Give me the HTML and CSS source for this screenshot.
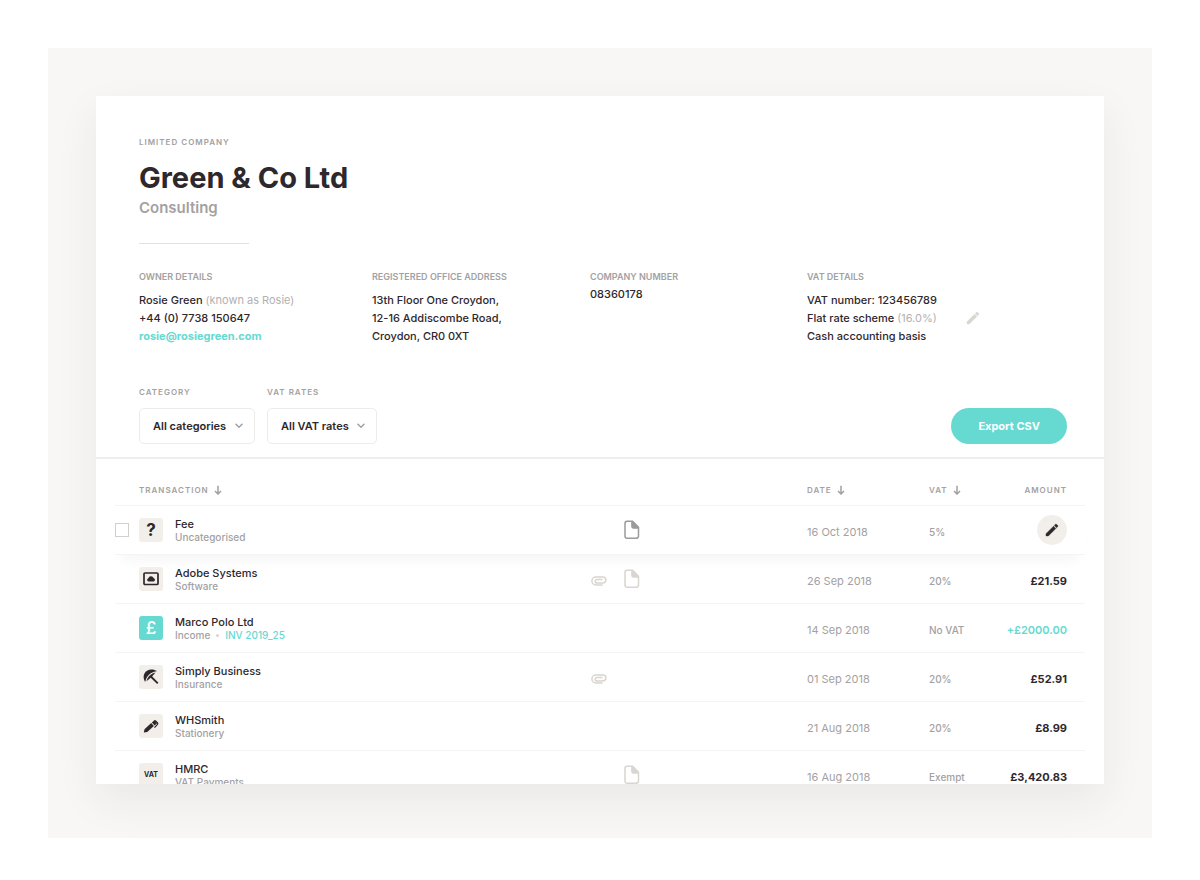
FILE: index.html
```html
<!DOCTYPE html>
<html lang="en">
<head>
<meta charset="utf-8">
<meta name="viewport" content="width=device-width, initial-scale=1">
<title>Green &amp; Co Ltd</title>
<link rel="stylesheet" href="styles.css">
</head>
<body>
<svg class="defs" aria-hidden="true">
  <symbol id="pencil" viewBox="0 0 24 24"><path d="M3 17.500V21h3.500L17.800 9.700l-3.500-3.500zM20.700 6.800a1 1 0 0 0 0-1.400l-2.100-2.100a1 1 0 0 0-1.400 0l-1.800 1.800 3.500 3.500z" fill="currentColor" stroke="currentColor" stroke-width=".6"/></symbol>
  <symbol id="arrow" viewBox="0 0 8 10"><path d="M4 .8v8M1 6l3 3 3-3" fill="none" stroke="currentColor" stroke-width="1.5"/></symbol>
  <symbol id="chevron" viewBox="0 0 8 6"><path d="M1 1.2l3 3 3-3" fill="none" stroke="currentColor" stroke-width="1.5" stroke-linecap="round" stroke-linejoin="round"/></symbol>
  <symbol id="file" viewBox="0 0 16 20"><path d="M3 1.3h5.6l5.900 6V16a2.300 2.300 0 0 1-2.300 2.300H3.200A2.300 2.300 0 0 1 1 16V3.500A2.200 2.200 0 0 1 3 1.300z" fill="none" stroke="currentColor" stroke-width="1.500"/><path d="M7.200 1.300h1.800l6 6.200v1.300H9.500a2.300 2.300 0 0 1-2.300-2.300z" fill="currentColor"/></symbol>
  <symbol id="clip" viewBox="0 0 16 10"><path d="M11.500 9H4.900a4 4 0 0 1 0-8h7a3 3 0 0 1 0 6H6a1.800 1.800 0 0 1 0-3.600h5.500" fill="none" stroke="currentColor" stroke-width="1.500"/></symbol>
</svg>
<main class="stage">
  <article class="card">
    <header class="company">
      <p class="label tracked">LIMITED COMPANY</p>
      <h1 class="title">Green &amp; Co Ltd</h1>
      <p class="sector">Consulting</p>
      <hr class="rule">
      <div class="details">
        <section>
          <h2 class="label">OWNER DETAILS</h2>
          <div class="lines">
            <p>Rosie Green <span class="muted">(known as Rosie)</span></p>
            <p>+44 (0) 7738 150647</p>
            <p><a class="link strong" href="mailto:rosie@rosiegreen.com">rosie@rosiegreen.com</a></p>
          </div>
        </section>
        <section>
          <h2 class="label">REGISTERED OFFICE ADDRESS</h2>
          <div class="lines">
            <p>13th Floor One Croydon,</p>
            <p>12-16 Addiscombe Road,</p>
            <p>Croydon, CR0 0XT</p>
          </div>
        </section>
        <section>
          <h2 class="label">COMPANY NUMBER</h2>
          <div class="lines close"><p>08360178</p></div>
        </section>
        <section>
          <h2 class="label">VAT DETAILS</h2>
          <div class="lines vat-lines">
            <div>
              <p>VAT number: 123456789</p>
              <p>Flat rate scheme <span class="muted">(16.0%)</span></p>
              <p>Cash accounting basis</p>
            </div>
            <button class="edit-plain" type="button" aria-label="Edit VAT details"><svg width="16" height="16"><use href="#pencil"/></svg></button>
          </div>
        </section>
      </div>
    </header>

    <form class="filters">
      <div class="field">
        <label class="label tracked" for="category">CATEGORY</label>
        <div class="select"><select id="category"><option>All categories</option></select><svg width="8" height="6"><use href="#chevron"/></svg></div>
      </div>
      <div class="field">
        <label class="label tracked" for="rates">VAT RATES</label>
        <div class="select"><select id="rates"><option>All VAT rates</option></select><svg width="8" height="6"><use href="#chevron"/></svg></div>
      </div>
      <button class="export" type="button">Export CSV</button>
    </form>

    <table class="transactions">
      <colgroup><col class="c-check"><col><col class="c-files"><col class="c-date"><col class="c-vat"><col class="c-amount"></colgroup>
      <thead>
        <tr>
          <td></td>
          <th scope="col"><span class="label tracked">TRANSACTION <svg width="8" height="10"><use href="#arrow"/></svg></span></th>
          <td></td>
          <th scope="col"><span class="label tracked">DATE <svg width="8" height="10"><use href="#arrow"/></svg></span></th>
          <th scope="col"><span class="label tracked">VAT <svg width="8" height="10"><use href="#arrow"/></svg></span></th>
          <th scope="col" class="amount"><span class="label tracked">AMOUNT</span></th>
        </tr>
      </thead>
      <tbody>
        <tr class="active">
          <td><input class="check" type="checkbox" aria-label="Select Fee"></td>
          <td><div class="entry"><span class="tile question">?</span><div><p class="name">Fee</p><p class="kind">Uncategorised</p></div></div></td>
          <td><div class="files"><svg class="file dark" width="16" height="20"><use href="#file"/></svg></div></td>
          <td class="date">16 Oct 2018</td>
          <td class="vat">5%</td>
          <td class="action"><button class="edit" type="button" aria-label="Edit Fee"><svg width="16" height="16"><use href="#pencil"/></svg></button></td>
        </tr>
        <tr>
          <td></td>
          <td><div class="entry"><span class="tile"><svg width="16" height="14" viewBox="0 0 16 14"><rect x="1" y="1" width="14" height="11.500" rx="1" fill="none" stroke="currentColor" stroke-width="1.700"/><path d="M5.600 9.500a1.700 1.700 0 0 1-.3-3.300 2.800 2.800 0 0 1 5.300-.3 1.900 1.900 0 0 1 .1 3.600z" fill="currentColor"/></svg></span><div><p class="name">Adobe Systems</p><p class="kind">Software</p></div></div></td>
          <td><div class="files"><svg class="clip" width="16" height="10"><use href="#clip"/></svg><svg class="file" width="16" height="20"><use href="#file"/></svg></div></td>
          <td class="date">26 Sep 2018</td>
          <td class="vat">20%</td>
          <td class="amount">£21.59</td>
        </tr>
        <tr>
          <td></td>
          <td><div class="entry"><span class="tile pound">£</span><div><p class="name">Marco Polo Ltd</p><p class="kind">Income<span class="dot"></span><a class="link" href="#invoice">INV 2019_25</a></p></div></div></td>
          <td></td>
          <td class="date">14 Sep 2018</td>
          <td class="vat">No VAT</td>
          <td class="amount income">+£2000.00</td>
        </tr>
        <tr>
          <td></td>
          <td><div class="entry"><span class="tile"><svg width="16" height="16" viewBox="0 0 16 16"><path d="M2.200 13C-1.500 7.500 1.800.800 8 .600c2.300-.1 4.300.5 6 1.700C8.500 2.600 3.500 6.500 2.200 13z" fill="currentColor"/><path d="M3.500 12.200C4.300 8 7.500 4.700 12.500 3.500L9.300 7.200 7.400 9.100z" fill="currentColor"/><path d="M7.600 7.300l7.200 7.100" stroke="currentColor" stroke-width="1.900" fill="none"/></svg></span><div><p class="name">Simply Business</p><p class="kind">Insurance</p></div></div></td>
          <td><div class="files"><svg class="clip" width="16" height="10"><use href="#clip"/></svg></div></td>
          <td class="date">01 Sep 2018</td>
          <td class="vat">20%</td>
          <td class="amount">£52.91</td>
        </tr>
        <tr>
          <td></td>
          <td><div class="entry"><span class="tile"><svg width="16" height="16" viewBox="0 0 16 16"><path d="M.800 14.600l.7-3.300 6.700-6.200 2.700 2.900-6.700 6zM8.900 4.400l2.600-2.300 2.800 3-2.700 2.400z" fill="currentColor"/><path d="M12 2.300l2.600 2.600c.4.500.3 1-.1 1.500l-3 3.200" fill="none" stroke="currentColor" stroke-width="1.200"/></svg></span><div><p class="name">WHSmith</p><p class="kind">Stationery</p></div></div></td>
          <td></td>
          <td class="date">21 Aug 2018</td>
          <td class="vat">20%</td>
          <td class="amount">£8.99</td>
        </tr>
        <tr>
          <td></td>
          <td><div class="entry"><span class="tile vat-tile">VAT</span><div><p class="name">HMRC</p><p class="kind">VAT Payments</p></div></div></td>
          <td><div class="files"><svg class="file" width="16" height="20"><use href="#file"/></svg></div></td>
          <td class="date">16 Aug 2018</td>
          <td class="vat">Exempt</td>
          <td class="amount">£3,420.83</td>
        </tr>
      </tbody>
    </table>
  </article>
</main>
</body>
</html>
```
FILE: styles.css
```css
:root {
  --ink: #2e272c;
  --grey: #a3a1a2;
  --pale: #d9d5d0;
  --sand: #f2efeb;
  --line: #f5f4f3;
  --teal: #66d9d1;
}

* { box-sizing: border-box; }

body {
  margin: 0;
  height: 100vh;
  padding: 48px 48px 42px;
  background: #fff;
  color: var(--ink);
  font: 11px/18px Inter, "Liberation Sans", sans-serif;
}

h1, h2, p { margin: 0; }
button, select, input { margin: 0; font: inherit; color: inherit; }
button { border: 0; cursor: pointer; }
svg { display: block; }
.defs { display: none; }

.stage {
  display: flex;
  height: 100%;
  padding: 48px 48px 54px;
  background: #f8f7f5;
  overflow: hidden;
}

.card {
  flex: 1;
  min-width: 0;
  overflow: hidden;
  background: #fff;
  box-shadow: 0 16px 40px rgba(46, 39, 44, 0.07);
}

.label {
  display: block;
  color: var(--grey);
  font-size: 9px;
  font-weight: 600;
  line-height: 12px;
}
.tracked { font-size: 8px; letter-spacing: 1px; }
.muted { color: #b3b1b1; font-weight: 400; }
.link { color: var(--teal); text-decoration: none; }
.strong { font-weight: 700; }

.company { padding: 40px 37px 0 43px; }
.title {
  margin-top: 12px;
  font-size: 29px;
  font-weight: 700;
  line-height: 36px;
}
.sector {
  margin-top: 2px;
  color: var(--grey);
  font-size: 15px;
  font-weight: 600;
  line-height: 20px;
}
.rule {
  width: 110px;
  height: 1px;
  margin: 25px 0 0;
  border: 0;
  background: #e4e2e0;
}

.details {
  display: grid;
  grid-template-columns: 233fr 218fr 217fr 260fr;
  margin-top: 27px;
  font-weight: 500;
}
.lines { margin-top: 8px; white-space: nowrap; }
.close { margin-top: 2px; }
.vat-lines { display: flex; align-items: center; gap: 28px; }
.edit-plain { padding: 0; background: none; color: var(--pale); }

.filters {
  display: flex;
  align-items: flex-end;
  gap: 12px;
  margin-top: 41px;
  padding: 0 37px 13px 43px;
  border-bottom: 2px solid #efeeec;
}
.field { display: grid; gap: 10px; }
.select { display: grid; align-items: center; }
.select > * { grid-area: 1 / 1; }
.select svg { justify-self: end; margin-right: 12px; color: var(--grey); pointer-events: none; }
.select select {
  height: 36px;
  padding: 0 27px 0 13px;
  appearance: none;
  border: 1px solid #eeebe8;
  border-radius: 5px;
  background: #fff;
  font-weight: 600;
}
.export {
  height: 36px;
  margin-left: auto;
  padding: 0 27px;
  border-radius: 18px;
  background: var(--teal);
  color: #fff;
  font-weight: 700;
}

.transactions {
  width: calc(100% - 38px);
  margin: 0 19px;
  table-layout: fixed;
  border-spacing: 0;
}
.c-check { width: 24px; }
.c-files { width: 216px; }
.c-date { width: 122px; }
.c-vat { width: 62px; }
.c-amount { width: 94px; }

.transactions td, .transactions th {
  height: 49px;
  padding: 0;
  border-bottom: 1px solid var(--line);
  text-align: left;
  white-space: nowrap;
}
.transactions thead td, .transactions thead th { height: 47px; padding-top: 14px; }
thead .label { display: inline-flex; align-items: center; gap: 5px; }

.active { box-shadow: 0 12px 14px -8px rgba(46, 39, 44, 0.05); }

.check {
  display: block;
  width: 14px;
  height: 14px;
  appearance: none;
  border: 1px solid #d3cfcc;
  background: #fff;
}
.entry { display: flex; align-items: center; gap: 12px; }
.tile {
  display: grid;
  place-items: center;
  flex: none;
  width: 24px;
  height: 24px;
  border-radius: 3px;
  background: var(--sand);
}
.question { font-size: 17px; font-weight: 700; }
.pound { background: var(--teal); color: #fff; font-size: 17px; font-weight: 500; }
.vat-tile { font-size: 7px; font-weight: 700; }
.name { font-weight: 500; line-height: 14px; }
.kind { display: flex; align-items: center; color: var(--grey); font-size: 10px; font-weight: 500; line-height: 12px; }
.dot { width: 3px; height: 3px; margin: 0 6px; border-radius: 50%; background: var(--pale); }

.files {
  display: grid;
  grid-template-columns: 16px 16px;
  align-items: center;
  gap: 17px;
  color: var(--pale);
}
.file { grid-column: 2; }
.clip { margin-top: 3px; }
.dark { color: #9c9a9b; }

.transactions .date, .transactions .vat { padding-top: 3px; color: var(--grey); }
.transactions .vat { font-size: 10px; font-weight: 500; }
.transactions .amount { padding-right: 18px; text-align: right; font-weight: 700; }
.transactions tbody .amount { padding-top: 3px; }
.transactions .income { color: var(--teal); font-weight: 600; }
.transactions .action { padding-right: 18px; }
.edit {
  display: grid;
  place-items: center;
  width: 30px;
  height: 30px;
  margin-left: auto;
  padding: 0;
  border-radius: 50%;
  background: var(--sand);
}
```
